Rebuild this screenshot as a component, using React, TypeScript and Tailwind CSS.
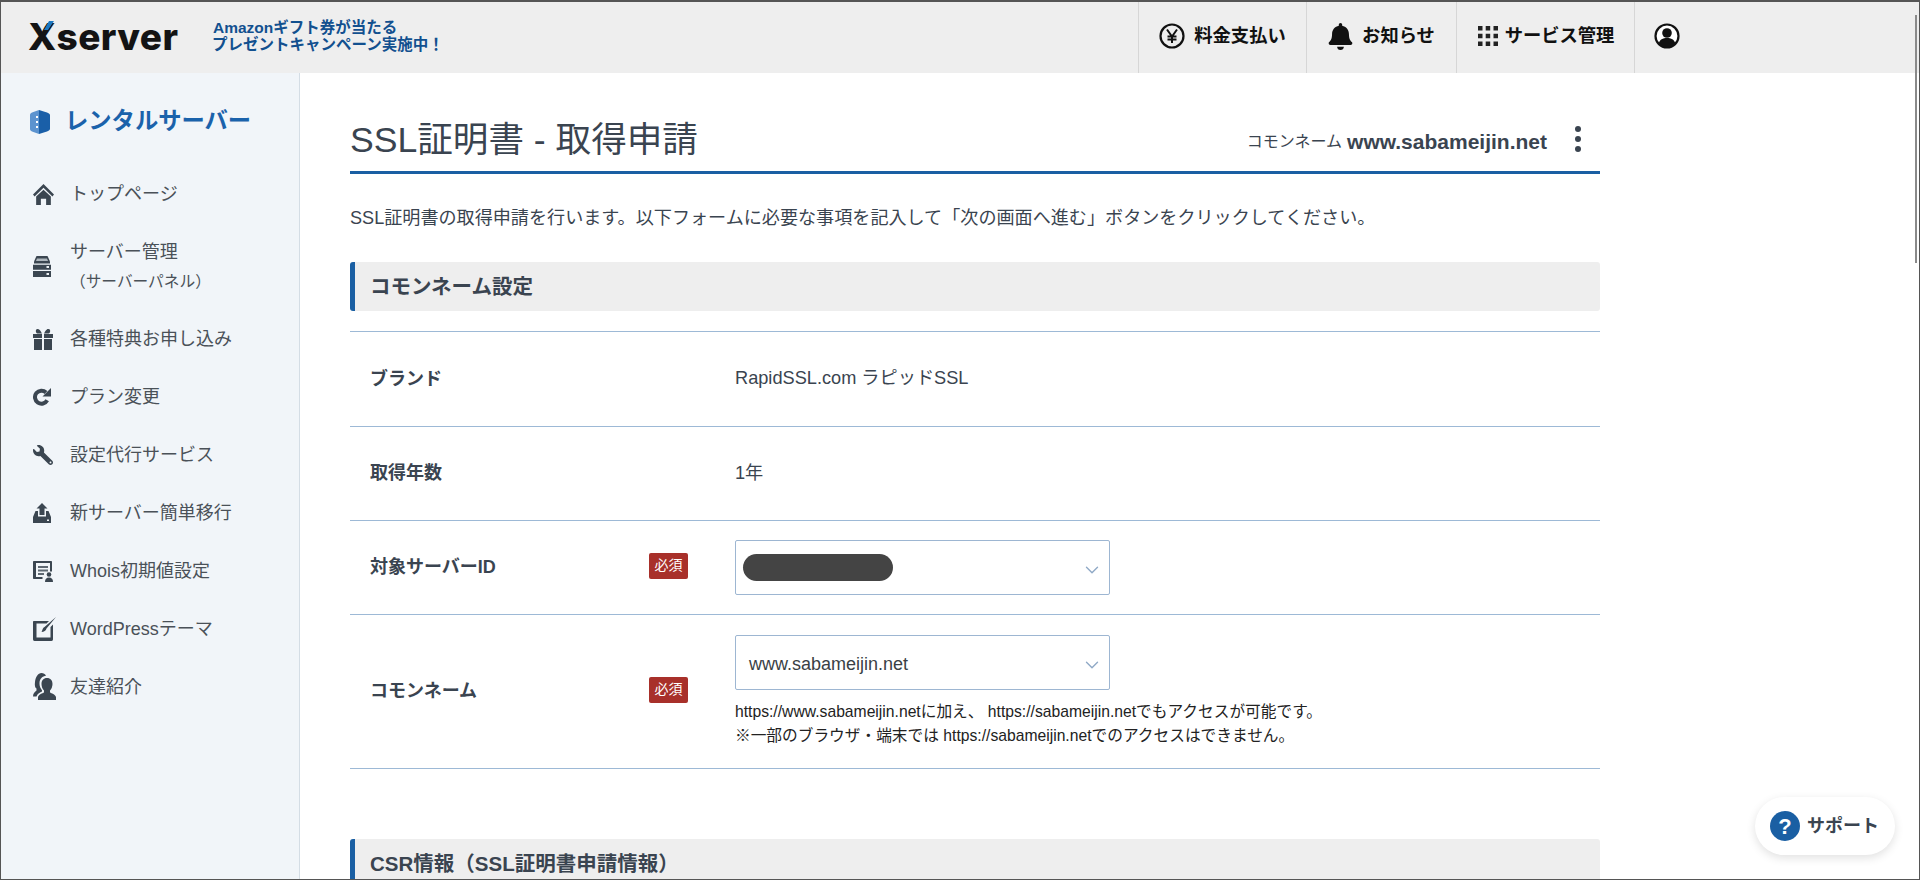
import { FaBell, FaWrench } from "react-icons/fa";
import { ChevronDown } from "lucide-react";
import { ReactNode } from "react";

const font = "font-['Liberation_Sans','Noto_Sans_CJK_JP',sans-serif]";

function HomeIcon() {
  return (
    <svg viewBox="0 0 20 20" className="w-[21px] h-[21px]" fill="#3b4651">
      <path d="M10 0l10 10-1.500 1.800L10 3.500 1.500 11.800 0 10z" />
      <path d="M10 5.500l7 6.500v8h-4.500v-6h-5v6H3v-8z" />
    </svg>
  );
}

function ServerIcon() {
  return (
    <svg viewBox="0 0 18 21" className="w-[18px] h-[21px]" fill="#3b4651">
      <path d="M3.500 0h11L17 5.500v2H1v-2z" />
      <path d="M0 8.800h18v5H0zM0 15h18v6H0z" />
      <path d="M4 2.500h10l1 2.500H3z" fill="#aeb6bd" />
      <path d="M13.500 10h2.500v2h-2.500zM13.500 17h2.500v2h-2.500z" fill="#eef2f5" />
    </svg>
  );
}

function GiftIcon() {
  return (
    <svg viewBox="0 0 20 21" className="w-[20px] h-[21px]" fill="#3b4651">
      <path d="M1 10h8v11H1zM11 10h8v11h-8zM0 5h9v4H0zM11 5h9v4h-9z" />
      <path d="M9 4.500C7 .5 5.500 0 4.500 0 3 0 2.500 1.500 3 3c.3 1 1 1.500 2 1.500zM11 4.500C13 .5 14.500 0 15.500 0c1.500 0 2 1.500 1.500 3-.3 1-1 1.500-2 1.500z" />
    </svg>
  );
}

function RedoIcon() {
  return (
    <svg viewBox="0 0 18 18" className="w-[18px] h-[18px]" fill="none">
      <path d="M14.200 12.300A6.500 6.500 0 1 1 13 4.500" stroke="#3b4651" strokeWidth="4" />
      <path d="M18 0v8.500H9.500z" fill="#3b4651" />
    </svg>
  );
}

function MoveIcon() {
  return (
    <svg viewBox="0 0 18 20" className="w-[18px] h-[20px]" fill="#3b4651">
      <path d="M9 0l5.500 5.500h-3V12h-5V5.500h-3z" />
      <path d="M2.500 8H5v5.500h8V8h2.500L18 14v6H0v-6z" />
      <path d="M14 16.500h2v1.500h-2z" fill="#eef2f5" />
    </svg>
  );
}

function WhoisIcon() {
  return (
    <svg viewBox="0 0 20 21" className="w-[20px] h-[21px]" fill="#3b4651">
      <path d="M1 0h17c.6 0 1 .4 1 1v9.500h-2V2H3v14h6.500v2H1c-.6 0-1-.4-1-1V1c0-.6.4-1 1-1z" />
      <path d="M5 5h10v2H5zM5 8.500h10v2H5zM5 12h6v2H5z" opacity="0.8" />
      <circle cx="16" cy="13.500" r="2.300" />
      <path d="M12 21c0-3 1.500-4.500 4-4.500s4 1.500 4 4.500z" />
    </svg>
  );
}

function ThemeIcon() {
  return (
    <svg viewBox="0 0 23 24" className="w-[23px] h-[24px]" fill="#3b4651">
      <path d="M1 4h15l-2.500 2.500H3.500v14h14V10L20 7.500V22c0 1-.5 2-1.500 2h-17C.5 24 0 23 0 22V5c0-.6.4-1 1-1z" />
      <path d="M23 0l-9.500 11.500c-.5 2-2.500 3.500-5 3.500 1-1 .5-3.500 3-5z" />
    </svg>
  );
}

function FriendIcon() {
  return (
    <svg viewBox="0 0 23 28" className="w-[23px] h-[28px]" fill="#3b4651">
      <path d="M14 5c3.500 0 5.500 2.500 5.500 6 0 2.500-1 5-2.500 6.500v2c1.500 1 5 1.500 6 4.500v3H5v-3c1-3 4.500-3.500 6-4.500v-2c-1.500-1.500-2.500-4-2.500-6.500C8.500 7.500 10.500 5 14 5z" />
      <path d="M8.500 0c2 0 3.500 1 4.500 2.800-3.500.2-6.500 3-6.500 7.700 0 2.700 1 5 2.500 6.700v1.300c-2 1-4.500 1.800-5.500 5H0c0-3 1.500-4.500 3.500-6v-2C2 15 1.500 12 2 9c.5-5 3-9 6.500-9z" />
    </svg>
  );
}

function LogoMark() {
  return (
    <svg viewBox="0 0 20 26" className="w-[20px] h-[26px]">
      <path d="M9 1L2 3.500C.8 4 0 5 0 6v14c0 1 .8 2 2 2.500L9 25z" fill="#5c93cf" />
      <path d="M9 1l8 2.500c1.200.4 3 1.500 3 2.500v14c0 1-1.800 2.100-3 2.500L9 25z" fill="#1a5fa8" />
      <path d="M6 7h2v2H6zM6 12h2v2H6zM6 17h2v2H6z" fill="#fff" />
    </svg>
  );
}

const menu: { icon: ReactNode; label: ReactNode; h: string }[] = [
  { icon: <HomeIcon />, label: "トップページ", h: "h-[58px]" },
  {
    icon: <ServerIcon />,
    label: (
      <>
        <span className="block">サーバー管理</span>
        <span className="block text-[15.700px] mt-[6px]">（サーバーパネル）</span>
      </>
    ),
    h: "h-[87px]",
  },
  { icon: <GiftIcon />, label: "各種特典お申し込み", h: "h-[58px]" },
  { icon: <RedoIcon />, label: "プラン変更", h: "h-[58px]" },
  { icon: <FaWrench size={20} className="-scale-x-100" />, label: "設定代行サービス", h: "h-[58px]" },
  { icon: <MoveIcon />, label: "新サーバー簡単移行", h: "h-[58px]" },
  { icon: <WhoisIcon />, label: "Whois初期値設定", h: "h-[58px]" },
  { icon: <ThemeIcon />, label: "WordPressテーマ", h: "h-[58px]" },
  { icon: <FriendIcon />, label: "友達紹介", h: "h-[58px]" },
];

function Required() {
  return (
    <span className="w-[39px] h-[26px] mb-[4px] shrink-0 rounded-[2px] bg-[#a8302a] text-white text-[14px] flex items-center justify-center font-['Liberation_Serif','Noto_Sans_CJK_JP',serif]">
      必須
    </span>
  );
}

function Select({ children }: { children: ReactNode }) {
  return (
    <div className="relative w-[375px] h-[55px] border border-[#9db6d2] rounded-[2px] bg-white flex items-center text-[18px] text-[#3a3f45]">
      {children}
      <ChevronDown size={22} strokeWidth={1.500} className="absolute right-[6px] top-[18px] text-[#8fa9c6]" />
    </div>
  );
}

function Row({ label, h, children, required }: { label: string; h: string; children: ReactNode; required?: boolean }) {
  return (
    <div className={`${h} border-b border-[#9db9d6] flex items-center`}>
      <div className="w-[338px] pl-[20px] shrink-0 flex items-center justify-between">
        <span className="text-[18px] font-bold text-[#3a4450]">{label}</span>
        {required && <Required />}
      </div>
      <div className="pl-[47px] text-[18.200px] text-[#3a4450]">{children}</div>
    </div>
  );
}

function SectionHead({ children }: { children: ReactNode }) {
  return (
    <div className="h-[49px] bg-[#eeeeee] border-l-[5px] border-[#1a5fa3] rounded-[3px] pl-[15px] pt-[2px] flex items-center text-[20.500px] font-bold text-[#3a4450]">
      {children}
    </div>
  );
}

function HeadItem({ icon, label, w }: { icon: ReactNode; label: string; w: string }) {
  return (
    <div className={`${w} h-full border-l border-[#d6d6d6] flex items-center justify-center gap-[9px] pb-[3px] text-[18.300px] font-bold text-[#111]`}>
      {icon}
      <span>{label}</span>
    </div>
  );
}

export default function App() {
  return (
    <div className={`${font} h-screen overflow-hidden relative border border-t-2 border-[#555] flex flex-col bg-white`}>
      <header className="h-[71px] shrink-0 bg-[#eeeeee] flex items-center">
        <div className="relative ml-[27px] w-[152px] pb-[1px]">
          <span className="font-['Inter',sans-serif] font-extrabold text-[37px] leading-none tracking-[0.4px] text-[#141414]">Xserver</span>
          <svg viewBox="0 0 10 9" className="absolute left-[16px] top-[3px] w-[10px] h-[9px]">
            <path d="M5 0h5L4 9H0z" fill="#1a78c2" />
          </svg>
        </div>
        <div className="ml-[32px] pb-[3px] text-[15.500px] leading-[17px] font-bold text-[#12508f]">
          <div className="ml-[1px]">Amazonギフト券が当たる</div>
          <div>プレゼントキャンペーン実施中！</div>
        </div>
        <div className="ml-auto h-full flex">
          <HeadItem
            w="w-[168px]"
            label="料金支払い"
            icon={
              <svg viewBox="0 0 26 26" className="w-[26px] h-[26px]" fill="none" stroke="#111" strokeWidth="2.200">
                <circle cx="13" cy="13" r="11.500" />
                <path d="M8 6.500l5 7 5-7M13 13.500V20M8.500 13.500h9M8.500 16.500h9" strokeWidth="2" />
              </svg>
            }
          />
          <HeadItem w="w-[150px]" label="お知らせ" icon={<FaBell size={27} className="-mx-[1px]" />} />
          <HeadItem
            w="w-[178px]"
            label="サービス管理"
            icon={
              <svg viewBox="0 0 20 20" className="w-[20px] h-[20px] ml-[1px] -mr-[2px]" fill="#222">
                <path d="M0 0h4.500v4.500H0zM7.700 0h4.500v4.500H7.700zM15.500 0H20v4.500h-4.500zM0 7.700h4.500v4.500H0zM7.700 7.700h4.500v4.500H7.700zM15.500 7.700H20v4.500h-4.500zM0 15.500h4.500V20H0zM7.700 15.500h4.500V20H7.700zM15.500 15.500H20V20h-4.500z" />
              </svg>
            }
          />
          <div className="w-[285px] h-full border-l border-[#d6d6d6] flex items-center pl-[19px] pb-[3px]">
            <svg viewBox="0 0 26 26" className="w-[26px] h-[26px]">
              <circle cx="13" cy="13" r="11.500" fill="#fff" stroke="#111" strokeWidth="2.200" />
              <circle cx="13" cy="10" r="4.800" fill="#111" />
              <path d="M4.500 21c1-4.500 4.500-6 8.500-6s7.500 1.500 8.500 6c-2 2-5 3.200-8.500 3.200S6.500 23 4.500 21z" fill="#111" />
            </svg>
          </div>
        </div>
      </header>

      <div className="flex flex-1 min-h-0">
        <aside className="w-[299px] shrink-0 bg-[#f1f5f9] border-r border-[#d4dde5]">
          <div className="h-[92px] pl-[29px] pt-[5px] flex items-center gap-[15px]">
            <LogoMark />
            <span className="text-[23.300px] font-bold text-[#1a62ab]">レンタルサーバー</span>
          </div>
          <nav>
            {menu.map((item, i) => (
              <div key={i} className={`${item.h} flex items-center text-[18px] text-[#4a5158]`}>
                <span className="w-[69px] pl-[32px] text-[#3b4651] shrink-0 flex justify-start">{item.icon}</span>
                <div className="leading-[24px]">{item.label}</div>
              </div>
            ))}
          </nav>
        </aside>

        <main className="flex-1 min-w-0 pl-[50px]">
          <div className="w-[1250px]">
            <div className="h-[101px] flex items-end justify-between border-b-[3px] border-[#1a5fa3] pb-[6px]">
              <h1 className="text-[35.600px] leading-[50px] text-[#3a4450]">SSL証明書 - 取得申請</h1>
              <div className="flex items-center mb-[8px] mr-[19px]">
                <span className="text-[16px] text-[#3a4450] mt-[3px]">コモンネーム</span>
                <span className="text-[21px] font-bold text-[#3a4450] ml-[5px] mt-[2px]">www.sabameijin.net</span>
                <svg viewBox="0 0 6 26" className="w-[6px] h-[26px] ml-[28px] mb-[3px]" fill="#3a4450">
                  <circle cx="3" cy="3" r="3" />
                  <circle cx="3" cy="13" r="3" />
                  <circle cx="3" cy="23" r="3" />
                </svg>
              </div>
            </div>
            <p className="mt-[31px] text-[18.100px] leading-[26px] text-[#3a4450]">
              SSL証明書の取得申請を行います。以下フォームに必要な事項を記入して「次の画面へ進む」ボタンをクリックしてください。
            </p>
            <div className="mt-[31px]">
              <SectionHead>コモンネーム設定</SectionHead>
            </div>
            <div className="mt-[20px] border-t border-[#9db9d6]">
              <Row label="ブランド" h="h-[95px]">
                RapidSSL.com ラピッドSSL
              </Row>
              <Row label="取得年数" h="h-[94px]">
                1年
              </Row>
              <Row label="対象サーバーID" h="h-[94px]" required>
                <Select>
                  <span className="ml-[7px] w-[150px] h-[27px] rounded-full bg-[#444444]" />
                </Select>
              </Row>
              <Row label="コモンネーム" h="h-[154px]" required>
                <Select>
                  <span className="ml-[13px] pt-[3px]">www.sabameijin.net</span>
                </Select>
                <p className="mt-[10px] text-[15.700px] leading-[24px] text-[#222]">
                  https://www.sabameijin.netに加え、 https://sabameijin.netでもアクセスが可能です。
                  <br />
                  ※一部のブラウザ・端末では https://sabameijin.netでのアクセスはできません。
                </p>
              </Row>
            </div>
            <div className="mt-[70px]">
              <SectionHead>CSR情報（SSL証明書申請情報）</SectionHead>
            </div>
          </div>
        </main>
      </div>

      <div className="absolute right-[24px] bottom-[24px] w-[140px] h-[58px] rounded-full bg-white shadow-[0_3px_10px_rgba(0,0,0,0.12)] flex items-center pl-[15px] gap-[7px]">
        <span className="w-[30px] h-[30px] rounded-full bg-[#1a5fa3] text-white font-bold text-[22px] flex items-center justify-center">?</span>
        <span className="text-[18px] font-bold text-[#3a4450]">サポート</span>
      </div>
      <div className="absolute right-[2px] top-[13px] w-[2px] h-[248px] bg-[#8a8a8a]" />
    </div>
  );
}
